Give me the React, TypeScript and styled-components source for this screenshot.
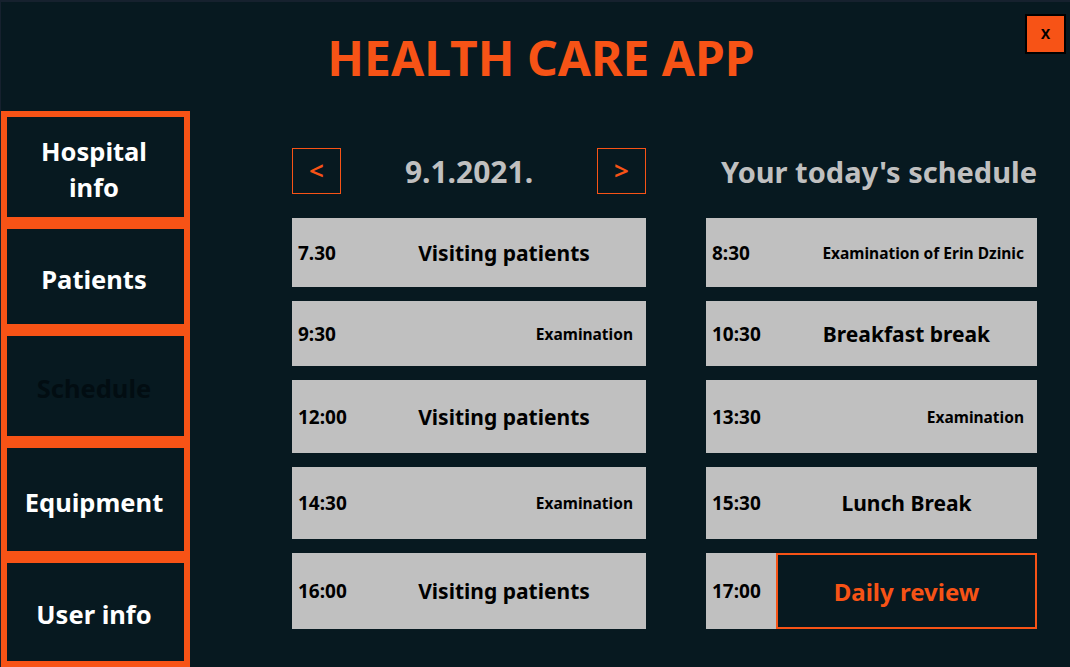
import React from 'react';
import styled, { createGlobalStyle } from 'styled-components';

const ORANGE = '#f75316';
const BG = '#071920';
const GREY = '#c0c0c0';

const GlobalStyle = createGlobalStyle`
  html, body {
    margin: 0;
    padding: 0;
    background: #16212e;
  }
  body {
    font-family: "Noto Sans", "Open Sans", sans-serif;
  }
`;

const Window = styled.div`
  position: relative;
  width: 1069px;
  height: 665px;
  margin: 2px 0 0 1px;
  background: ${BG};
  display: flex;
  flex-direction: column;
  overflow: hidden;
`;

const Header = styled.header`
  height: 110px;
  display: flex;
  justify-content: center;
  align-items: flex-start;
`;

const Title = styled.h1`
  margin: 32px 0 0 11px;
  font-size: 48px;
  font-weight: 700;
  line-height: 1;
  color: ${ORANGE};
`;

const CloseButton = styled.button`
  position: absolute;
  top: 12px;
  right: 4px;
  width: 41px;
  height: 40px;
  background: ${ORANGE};
  border: 2px solid #000;
  color: #000;
  font-family: inherit;
  font-size: 17px;
  font-weight: 600;
  line-height: 1;
  padding: 0 0 3px;
`;

const Body = styled.div`
  flex: 1;
  display: flex;
`;

const Sidebar = styled.nav`
  width: 189px;
  display: flex;
  flex-direction: column;
`;

const NavItem = styled.div<{ $h: number; $active?: boolean }>`
  height: ${p => p.$h}px;
  box-sizing: border-box;
  border: 6px solid ${ORANGE};
  padding: 4px 3px 0 0;
  display: flex;
  align-items: center;
  justify-content: center;
  text-align: center;
  font-size: 25.5px;
  font-weight: 700;
  line-height: 36px;
  color: ${p => (p.$active ? '#020d12' : '#ffffff')};
`;

const Main = styled.main`
  padding: 37px 0 0 102px;
`;

const Grid = styled.div`
  display: grid;
  grid-template-columns: 354px 331px;
  grid-template-rows: 56px 69px 65px 73px 72px 76px;
  column-gap: 60px;
  row-gap: 14px;
`;

const DateBar = styled.div`
  height: 46px;
  display: flex;
  align-items: center;
  justify-content: space-between;
`;

const ArrowButton = styled.button`
  width: 49px;
  height: 46px;
  box-sizing: border-box;
  background: transparent;
  border: 1px solid ${ORANGE};
  color: ${ORANGE};
  font-family: inherit;
  font-size: 26px;
  font-weight: 600;
  line-height: 1;
  padding: 0 0 3px;
`;

const DateText = styled.div`
  font-size: 30px;
  font-weight: 700;
  color: ${GREY};
`;

const Heading = styled.div`
  height: 46px;
  display: flex;
  align-items: center;
  justify-content: flex-end;
  font-size: 29px;
  font-weight: 700;
  color: ${GREY};
  white-space: nowrap;
`;

const Row = styled.div`
  display: grid;
  grid-template-columns: 70px 1fr;
  color: #000;
`;

const Time = styled.div`
  background: ${GREY};
  display: flex;
  align-items: center;
  padding-left: 6px;
  font-size: 19px;
  font-weight: 700;
`;

type Kind = 'large' | 'small' | 'review';

const Activity = styled.div<{ $kind: Kind }>`
  background: ${p => (p.$kind === 'review' ? BG : GREY)};
  border: ${p => (p.$kind === 'review' ? `2px solid ${ORANGE}` : 'none')};
  color: ${p => (p.$kind === 'review' ? ORANGE : '#000')};
  display: flex;
  align-items: center;
  justify-content: ${p => (p.$kind === 'small' ? 'flex-end' : 'center')};
  padding-right: ${p => (p.$kind === 'small' ? '13px' : '0')};
  font-size: ${p => (p.$kind === 'small' ? '15.5px' : p.$kind === 'review' ? '24px' : '21px')};
  font-weight: 700;
  white-space: nowrap;
`;

const navItems = [
  { label: ['Hospital', 'info'], h: 112 },
  { label: ['Patients'], h: 107 },
  { label: ['Schedule'], h: 112, active: true },
  { label: ['Equipment'], h: 115 },
  { label: ['User info'], h: 110 },
];

type Entry = { time: string; text: string; kind: Kind };

const weekSchedule: Entry[] = [
  { time: '7.30', text: 'Visiting patients', kind: 'large' },
  { time: '9:30', text: 'Examination', kind: 'small' },
  { time: '12:00', text: 'Visiting patients', kind: 'large' },
  { time: '14:30', text: 'Examination', kind: 'small' },
  { time: '16:00', text: 'Visiting patients', kind: 'large' },
];

const todaySchedule: Entry[] = [
  { time: '8:30', text: 'Examination of Erin Dzinic', kind: 'small' },
  { time: '10:30', text: 'Breakfast break', kind: 'large' },
  { time: '13:30', text: 'Examination', kind: 'small' },
  { time: '15:30', text: 'Lunch Break', kind: 'large' },
  { time: '17:00', text: 'Daily review', kind: 'review' },
];

function ScheduleRow({ entry }: { entry: Entry }) {
  return (
    <Row>
      <Time>{entry.time}</Time>
      <Activity $kind={entry.kind}>{entry.text}</Activity>
    </Row>
  );
}

export default function App() {
  return (
    <>
      <GlobalStyle />
      <Window>
        <Header>
          <Title>HEALTH CARE APP</Title>
        </Header>
        <CloseButton>x</CloseButton>
        <Body>
          <Sidebar>
            {navItems.map(item => (
              <NavItem key={item.label.join(' ')} $h={item.h} $active={item.active}>
                <div>
                  {item.label.map((line, i) => (
                    <div key={i}>{line}</div>
                  ))}
                </div>
              </NavItem>
            ))}
          </Sidebar>
          <Main>
            <Grid>
              <DateBar>
                <ArrowButton>&lt;</ArrowButton>
                <DateText>9.1.2021.</DateText>
                <ArrowButton>&gt;</ArrowButton>
              </DateBar>
              <Heading>Your today's schedule</Heading>
              {weekSchedule.map((entry, i) => (
                <React.Fragment key={i}>
                  <ScheduleRow entry={entry} />
                  <ScheduleRow entry={todaySchedule[i]} />
                </React.Fragment>
              ))}
            </Grid>
          </Main>
        </Body>
      </Window>
    </>
  );
}
